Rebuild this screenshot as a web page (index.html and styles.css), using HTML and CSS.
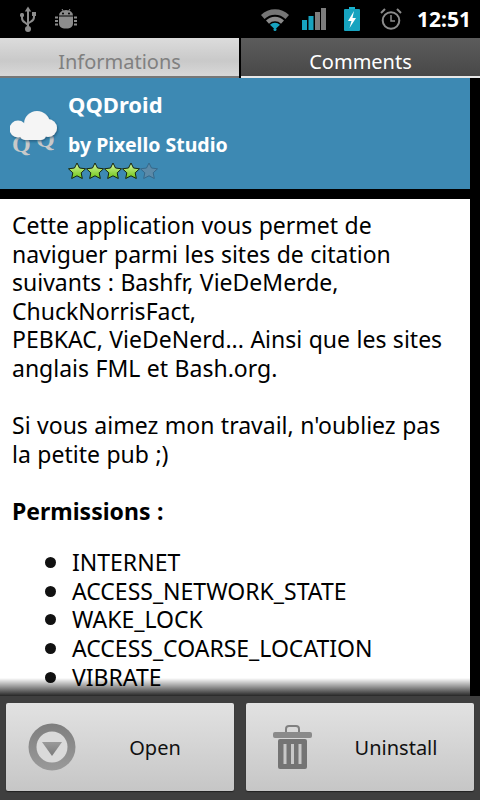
FILE: index.html
```html
<!DOCTYPE html>
<html lang="en">
  <head>
    <meta charset="UTF-8" />
    <title>QQDroid</title>
    <link rel="stylesheet" href="styles.css">
  </head>

  <body>
    <div class="status">
      <div class="status-left">
        <svg width="18" height="26" viewBox="0 0 18 26">
          <g fill="none" stroke="#8c8c8c" stroke-width="2">
            <path d="M9 4V22"/>
            <path d="M3 9v3q0 3 3 4.500l3 2.500"/>
            <path d="M15 8v3q0 3-3 4.500l-3 2"/>
          </g>
          <g fill="#8c8c8c">
            <path d="M9 0.500l-3.200 5h6.400z"/>
            <rect x="1" y="7" width="4" height="4" rx="1.500"/>
            <rect x="13" y="6" width="4" height="4"/>
            <circle cx="9" cy="23" r="3"/>
          </g>
        </svg>
        <svg width="22" height="22" viewBox="0 0 22 22">
          <path d="M7 1l1.500 2.500M15 1l-1.500 2.500" stroke="#8c8c8c" fill="none"/>
          <path d="M4 7.500a7 5.500 0 0 1 14 0z" fill="#8c8c8c"/>
          <path d="M4 8.500h14v7a5 5 0 0 1-5 5H9a5 5 0 0 1-5-5z" fill="#8c8c8c"/>
          <path d="M1.500 8.500v9M20.500 8.500v9" stroke="#8c8c8c" stroke-width="3" stroke-dasharray="2 1.500" fill="none"/>
          <circle cx="8" cy="5.500" r="1" fill="#000"/>
          <circle cx="14" cy="5.500" r="1" fill="#000"/>
        </svg>
      </div>
      <div class="status-right">
        <svg width="28" height="23" viewBox="0 0 28 23">
          <path d="M0 7a20 20 0 0 1 28 0l-3.500 4a15 15 0 0 0-21 0z" fill="#757575"/>
          <path d="M5 12.500a12.500 12.500 0 0 1 18 0l-3 3.200a8.500 8.500 0 0 0-12 0z" fill="#8a8a8a"/>
          <path d="M9 16.700a7.500 7.500 0 0 1 10 0L14 21.500z" fill="#17a3bf"/>
          <circle cx="14" cy="21.500" r="1.500" fill="#17a3bf"/>
        </svg>
        <svg class="ic-signal" width="24" height="22" viewBox="0 0 24 22">
          <rect x="0" y="12" width="5" height="10" fill="#17a3bf"/>
          <rect x="6.500" y="8" width="5" height="14" fill="#17a3bf"/>
          <rect x="13" y="4" width="5" height="18" fill="#7d7d7d"/>
          <rect x="19" y="0" width="5" height="22" fill="#7d7d7d"/>
        </svg>
        <svg class="ic-batt" width="16" height="24" viewBox="0 0 16 24">
          <rect x="5" y="0" width="6" height="2" fill="#17b4d0"/>
          <rect x="0" y="2" width="16" height="22" rx="1" fill="#17a3bf"/>
          <path d="M10 4L4 14h3.500L5.500 21 12 11H8.500z" fill="#fff"/>
        </svg>
        <svg class="ic-alarm" width="22" height="22" viewBox="0 0 22 22">
          <circle cx="11" cy="12.500" r="8.300" fill="none" stroke="#8c8c8c" stroke-width="2"/>
          <path d="M11 7v6h4" fill="none" stroke="#8c8c8c" stroke-width="1.500"/>
          <path d="M1 5l4-4M21 5l-4-4" stroke="#8c8c8c" stroke-width="2" fill="none"/>
        </svg>
        <span class="clock">12:51</span>
      </div>
    </div>

    <div class="tabs">
      <div class="tab tab-off">Informations</div>
      <div class="tab tab-on">Comments</div>
    </div>

    <div class="main">
      <div class="header">
        <svg class="logo" width="50" height="50" viewBox="0 0 50 50">
          <defs>
            <filter id="soft" x="-20%" y="-20%" width="140%" height="140%">
              <feDropShadow dx="1" dy="1.500" stdDeviation="1.200" flood-color="#1d4f6e" flood-opacity="0.7"/>
            </filter>
          </defs>
          <text x="2" y="44" class="logo-q">Q</text>
          <text x="26" y="39" class="logo-q">Q</text>
          <g fill="#f5f5f5" filter="url(#soft)">
            <circle cx="8" cy="21" r="8.500"/>
            <circle cx="27" cy="16" r="13"/>
            <circle cx="38" cy="20" r="9"/>
            <rect x="10" y="18" width="26" height="14" rx="5"/>
          </g>
        </svg>
        <div class="header-text">
          <div class="app-name">QQDroid</div>
          <div class="app-author">by Pixello Studio</div>
          <div class="stars">
            <svg width="90" height="18" viewBox="0 0 90 18">
              <defs>
                <linearGradient id="g" x1="0" y1="0" x2="0" y2="1">
                  <stop offset="0" stop-color="#d8f7a0"/>
                  <stop offset="1" stop-color="#6cc414"/>
                </linearGradient>
                <path id="s" d="M9 1l2.500 5 6 .8-4.300 4 1.100 5.700L9 13.800l-5.300 2.700 1.100-5.700-4.300-4 6-.8z"/>
              </defs>
              <use href="#s" fill="url(#g)" stroke="#16240c"/>
              <use href="#s" x="18" fill="url(#g)" stroke="#16240c"/>
              <use href="#s" x="36" fill="url(#g)" stroke="#16240c"/>
              <use href="#s" x="54" fill="url(#g)" stroke="#16240c"/>
              <use href="#s" x="72" fill="#5c8aa8" stroke="#35688a"/>
            </svg>
          </div>
        </div>
      </div>
      <div class="content">
        <p>Cette application vous permet de naviguer parmi les sites de citation suivants : Bashfr, VieDeMerde, ChuckNorrisFact,<br>PEBKAC, VieDeNerd... Ainsi que les sites anglais FML et Bash.org.</p>
        <p>Si vous aimez mon travail, n'oubliez pas la petite pub ;)</p>
        <p><b>Permissions :</b></p>
        <ul>
          <li>INTERNET</li>
          <li>ACCESS_NETWORK_STATE</li>
          <li>WAKE_LOCK</li>
          <li>ACCESS_COARSE_LOCATION</li>
          <li>VIBRATE</li>
        </ul>
      </div>
      <div class="fade"></div>
    </div>

    <div class="actions">
      <div class="btn">
        <svg class="btn-icon" width="48" height="48" viewBox="0 0 48 48">
          <defs>
            <linearGradient id="r" x1="0" y1="0" x2="0" y2="1">
              <stop offset="0" stop-color="#7e7e7e"/>
              <stop offset="1" stop-color="#9a9a9a"/>
            </linearGradient>
            <linearGradient id="t" x1="0" y1="0" x2="0" y2="1">
              <stop offset="0" stop-color="#9a9a9a"/>
              <stop offset="1" stop-color="#7a7a7a"/>
            </linearGradient>
          </defs>
          <circle cx="24" cy="24" r="23.500" fill="url(#r)"/>
          <circle cx="24" cy="24" r="15.500" fill="#dadada"/>
          <path d="M14 19h20L24 33z" fill="url(#t)"/>
        </svg>
        <span class="btn-label">Open</span>
      </div>
      <div class="btn">
        <svg class="btn-icon btn-icon-trash" width="39" height="44" viewBox="0 0 39 44">
          <path d="M13 7V4a3 3 0 0 1 3-3h7a3 3 0 0 1 3 3v3" fill="none" stroke="#808080" stroke-width="2"/>
          <rect x="0" y="7" width="39" height="6" rx="2" fill="#8a8a8a"/>
          <rect x="5" y="14" width="29" height="30" rx="2" fill="#747474"/>
          <path d="M12 19v20M19.500 19v20M27 19v20" stroke="#c8c8c8" stroke-width="3" fill="none"/>
        </svg>
        <span class="btn-label btn-label-wide">Uninstall</span>
      </div>
    </div>
  </body>
</html>
```

FILE: styles.css
```css
* {
  margin: 0;
  padding: 0;
  box-sizing: border-box;
}

html,
body {
  height: 100%;
}

body {
  display: flex;
  flex-direction: column;
  height: 800px;
  overflow: hidden;
  background: #000;
  font-family: "Noto Sans", "Open Sans", sans-serif;
}

/* status bar */
.status {
  display: flex;
  justify-content: space-between;
  align-items: center;
  height: 38px;
  flex: none;
  background: #000;
}

.status-left {
  display: flex;
  align-items: center;
  gap: 18px;
  padding-left: 19px;
}

.status-right {
  display: flex;
  align-items: center;
  padding-right: 9px;
}

.ic-signal {
  margin-left: 13px;
}

.ic-batt {
  margin-left: 18px;
}

.ic-alarm {
  margin-left: 20px;
}

.clock {
  margin-left: 15px;
  color: #fff;
  font-size: 21px;
  font-weight: 700;
  line-height: 24px;
}

/* tabs */
.tabs {
  display: flex;
  gap: 2px;
  height: 40px;
  flex: none;
}

.tab {
  flex: 1;
  font-size: 20px;
  text-align: center;
  line-height: 30px;
  padding-top: 9px;
}

.tab-off {
  background: linear-gradient(#dcdcdc, #c9c9c9 60%, #d8d8d8);
  color: #808080;
  border-bottom: 2px solid #777;
}

.tab-on {
  background: linear-gradient(#5c5c5c, #484848);
  color: #fff;
  border-bottom: 2px solid #e8e8e8;
}

/* scrolled part */
.main {
  position: relative;
  flex: 1;
  overflow: hidden;
  padding-right: 10px;
  background: #000;
}

.header {
  display: flex;
  height: 111px;
  background: #3d89b3;
}

.logo {
  margin: 30px 0 0 10px;
  flex: none;
}

.logo-q {
  font-family: "Liberation Serif", serif;
  font-size: 24px;
  font-weight: 700;
  fill: #c9c9c9;
}

.header-text {
  margin-left: 8px;
  color: #fff;
  font-weight: 700;
}

.app-name {
  font-size: 22px;
  line-height: 28px;
  padding-top: 12px;
}

.app-author {
  font-size: 19.500px;
  line-height: 28px;
  margin-top: 13px;
}

.stars {
  height: 18px;
  margin-top: 3px;
}

.content {
  margin-top: 10px;
  padding: 12px 12px 0;
  background: #fff;
  color: #000;
  font-size: 23px;
  line-height: 28.600px;
  height: 600px;
}

.content p {
  margin-bottom: 28.600px;
  word-spacing: 0.500px;
}

.content ul {
  margin-top: -6px;
  padding-left: 60px;
  list-style: none;
}

.content li {
  position: relative;
}

.content li::before {
  content: "";
  position: absolute;
  left: -27px;
  top: 9px;
  width: 11px;
  height: 11px;
  border-radius: 50%;
  background: #111;
}

.fade {
  position: absolute;
  left: 0;
  right: 0;
  bottom: 0;
  height: 18px;
  background: linear-gradient(rgba(0, 0, 0, 0), rgba(0, 0, 0, 0.85));
}

/* bottom buttons */
.actions {
  display: flex;
  gap: 12px;
  height: 104px;
  flex: none;
  padding: 7px 6px 9px;
  background: #3f3f3f;
}

.btn {
  display: flex;
  flex: 1;
  align-items: center;
  border-radius: 2px;
  background: linear-gradient(#e2e2e2, #c6c6c6);
  box-shadow: 0 1px 1px #222;
}

.btn-icon {
  flex: none;
  margin-left: 22px;
}

.btn-icon-trash {
  margin-left: 27px;
}

.btn-label {
  flex: 1;
  text-align: center;
  font-size: 20px;
  color: #111;
}

.btn-label-wide {
  padding-left: 6px;
}
```
